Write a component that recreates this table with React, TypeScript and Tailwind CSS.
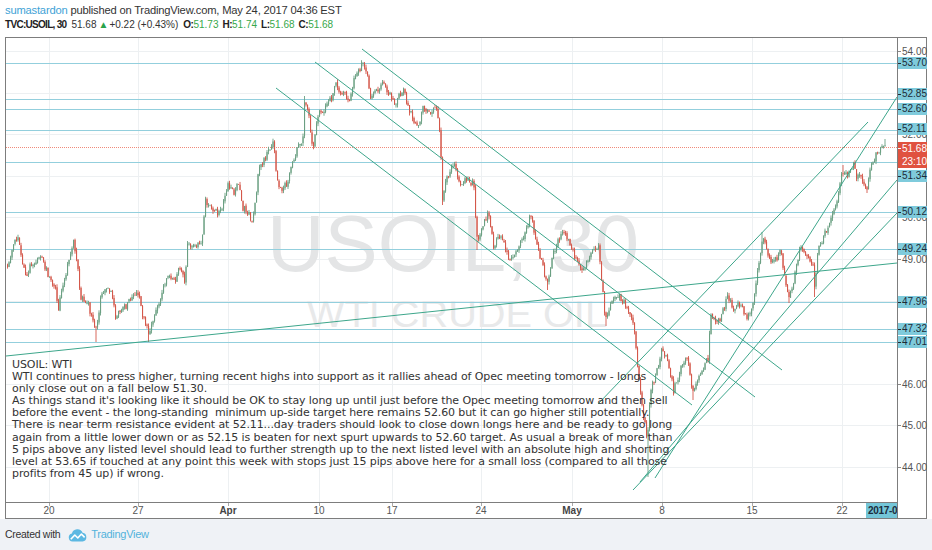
import React from 'react';

const SANS = '"Liberation Sans", Arial, sans-serif';

// y pixel for a price on the right scale
const Y = (p: number) => 51 + (54 - p) * 41.6;

// rough shape of the closes, in page pixels
const path: [number, number][] = [
  [7, 265], [12, 250], [17, 237], [22, 262], [25, 277], [32, 262], [40, 257], [48, 275], [55, 290], [58, 307],
  [63, 285], [68, 262], [73, 242], [77, 262], [80, 297], [88, 305], [95, 334], [100, 300], [107, 283], [111, 295],
  [115, 317], [125, 307], [137, 290], [142, 315], [148, 334], [155, 312], [167, 275], [175, 278], [180, 267],
  [184, 283], [187, 247], [195, 245], [200, 247], [203, 225], [205, 200], [212, 210], [220, 213], [224, 200],
  [227, 185], [233, 193], [238, 183], [242, 208], [247, 212], [252, 220], [255, 200], [258, 172], [265, 158],
  [273, 143], [277, 183], [282, 188], [287, 182], [292, 165], [297, 147], [302, 147], [304, 100], [308, 110],
  [312, 150], [318, 115], [324, 110], [330, 100], [335, 85], [340, 90], [343, 93], [348, 103], [355, 75],
  [363, 63], [367, 75], [370, 100], [376, 90], [383, 83], [390, 95], [395, 105], [402, 88], [408, 108],
  [417, 127], [423, 107], [430, 112], [437, 110], [440, 140], [442, 200], [445, 180], [453, 163], [460, 187],
  [465, 180], [473, 183], [477, 245], [482, 225], [488, 212], [493, 245], [500, 235], [510, 260], [518, 245],
  [525, 235], [530, 212], [535, 240], [542, 265], [547, 285], [552, 255], [558, 240], [563, 233], [570, 245],
  [577, 262], [583, 270], [590, 255], [598, 248], [605, 320], [612, 300], [617, 293], [625, 305], [633, 323],
  [637, 365], [643, 415], [647, 440], [650, 390], [655, 377], [662, 347], [667, 360], [673, 390], [680, 370],
  [687, 357], [692, 393], [700, 373], [708, 357], [710, 317], [720, 320], [727, 297], [733, 310], [740, 303],
  [747, 320], [753, 303], [757, 273], [762, 237], [767, 253], [772, 262], [777, 257], [780, 250], [783, 270],
  [788, 297], [793, 283], [800, 243], [807, 257], [813, 263], [814, 290], [818, 247], [823, 237], [830, 223],
  [837, 200], [842, 170], [846, 175], [850, 170], [853, 163], [856, 180], [860, 173], [864, 185], [867, 190],
  [870, 163], [877, 153], [883, 147], [885, 142],
];

const spikes: [number, number][] = [
  [95, 342], [148, 342], [304, 96], [442, 205], [477, 250], [547, 290], [605, 326], [648, 477], [692, 400],
  [757, 268], [762, 232], [788, 303], [814, 297], [842, 165], [867, 193], [885, 139],
];

function lerpPath(x: number) {
  for (let i = 1; i < path.length; i++) {
    if (x <= path[i][0]) {
      const [x0, y0] = path[i - 1];
      const [x1, y1] = path[i];
      const t = (x - x0) / (x1 - x0 || 1);
      return y0 + (y1 - y0) * t;
    }
  }
  return path[path.length - 1][1];
}

type Candle = { x: number; o: number; c: number; h: number; l: number };

function buildCandles(): Candle[] {
  let s = 98765;
  const rnd = () => {
    s = (s * 16807) % 2147483647;
    return s / 2147483647;
  };
  const out: Candle[] = [];
  let prev = lerpPath(7);
  for (let x = 7; x <= 885; x += 1.5) {
    const c = lerpPath(x) + (rnd() - 0.5) * 7;
    const o = prev + (rnd() - 0.5) * 1.5;
    const h = Math.min(o, c) - rnd() * 3;
    const l = Math.max(o, c) + rnd() * 3;
    out.push({ x, o, c, h, l });
    prev = c;
  }
  for (const [sx, sy] of spikes) {
    const k = out.reduce((best, cd, i) => (Math.abs(cd.x - sx) < Math.abs(out[best].x - sx) ? i : best), 0);
    if (sy > out[k].l) out[k].l = sy;
    if (sy < out[k].h) out[k].h = sy;
  }
  return out;
}

const candles = buildCandles();

const levels = [53.7, 52.85, 52.6, 52.11, 51.34, 50.12, 49.24, 47.96, 47.32, 47.01];

const trendLines: [number, number, number, number][] = [
  [362, 49, 782, 370],
  [315, 62, 755, 397],
  [276, 88, 692, 405],
  [6, 356, 897, 263],
  [598, 404, 868, 122],
  [633, 490, 897, 213],
  [640, 482, 897, 180],
  [655, 478, 897, 97],
];

const timeTicks: { x: number; label: string; bold?: boolean }[] = [
  { x: 49, label: '20' },
  { x: 138, label: '27' },
  { x: 228, label: 'Apr', bold: true },
  { x: 319, label: '10' },
  { x: 392, label: '17' },
  { x: 481, label: '24' },
  { x: 572, label: 'May', bold: true },
  { x: 662, label: '8' },
  { x: 752, label: '15' },
  { x: 842, label: '22' },
];

const plainPrices = [54, 53, 52, 51, 50, 49, 48, 47, 46, 45, 44];
// ones that sit fully behind a tag are not drawn as text
const hiddenPrices = [53, 51, 48, 47];

const priceTags: [string, number][] = [
  ['53.70', 63], ['52.85', 94], ['52.60', 109], ['52.11', 129], ['51.34', 176], ['50.12', 212],
  ['49.24', 249], ['47.96', 302], ['47.32', 329], ['47.01', 342],
];

const note = [
  'USOIL: WTI',
  'WTI continues to press higher, turning recent highs into support as it rallies ahead of Opec meeting tomorrow - longs',
  'only close out on a fall below 51.30.',
  "As things stand it's looking like it should be OK to stay long up until just before the Opec meeting tomorrow and then sell",
  'before the event - the long-standing  minimum up-side target here remains 52.60 but it can go higher still potentially.',
  'There is near term resistance evident at 52.11...day traders should look to close down longs here and be ready to go long',
  'again from a little lower down or as 52.15 is beaten for next spurt upwards to 52.60 target. As usual a break of more than',
  '5 pips above any listed level should lead to further strength up to the next listed level with an absolute high and shorting',
  'level at 53.65 if touched at any point this week with stops just 15 pips above here for a small loss (compared to all those',
  'profits from 45 up) if wrong.',
];

function PlotSvg() {
  return (
    <svg width={891} height={464} viewBox="6 38 891 464" className="block">
      {timeTicks.map((t) => (
        <line key={t.x} x1={t.x + 0.5} y1={38} x2={t.x + 0.5} y2={502} stroke="#edf0f2" />
      ))}
      {plainPrices.map((p) => (
        <line key={p} x1={6} y1={Math.round(Y(p)) + 0.5} x2={897} y2={Math.round(Y(p)) + 0.5} stroke="#edf0f2" />
      ))}
      <text x={267} y={271} fontFamily={SANS} fontSize={80} fill="#e4e5e6" textLength={372} lengthAdjust="spacingAndGlyphs">
        USOIL, 30
      </text>
      <text x={307} y={327} fontFamily={SANS} fontSize={36} fill="#e8e9ea" textLength={300} lengthAdjust="spacingAndGlyphs">
        WTI CRUDE OIL
      </text>
      {levels.map((p) => (
        <line key={p} x1={6} y1={Math.round(Y(p)) + 0.5} x2={897} y2={Math.round(Y(p)) + 0.5} stroke="#93cfdd" />
      ))}
      <line x1={6} y1={147.5} x2={897} y2={147.5} stroke="#f08a7a" strokeDasharray="1 1" />
      {candles.map((cd, i) => {
        const up = cd.c <= cd.o;
        const col = up ? '#6a9f82' : '#d4574a';
        const top = Math.min(cd.o, cd.c);
        const hgt = Math.max(Math.abs(cd.o - cd.c), 0.8);
        return (
          <g key={i}>
            <line x1={cd.x + 0.5} y1={cd.h} x2={cd.x + 0.5} y2={cd.l} stroke={col} strokeWidth={0.9} />
            <rect x={cd.x} y={top} width={1.1} height={hgt} fill={col} />
          </g>
        );
      })}
      {trendLines.map(([x1, y1, x2, y2], i) => (
        <line key={i} x1={x1} y1={y1} x2={x2} y2={y2} stroke="#3da68b" strokeWidth={1} />
      ))}
    </svg>
  );
}

function TradingViewLogo() {
  return (
    <svg width={19} height={14} viewBox="0 0 19 14">
      <path d="M4.5 13.5a4 4 0 0 1-0.6-7.9A5.6 5.6 0 0 1 14.6 4.8a4.4 4.4 0 0 1 0 8.7z" fill="#5cb8e2" />
      <path d="M2.8 11.2l4-4.2 3 3 3.6-4 3.2 3.4" fill="none" stroke="#ffffff" strokeWidth={1.6} strokeLinejoin="round" />
    </svg>
  );
}

export default function App() {
  return (
    <div className="w-[932px] h-[550px] bg-white flex flex-col overflow-hidden" style={{ fontFamily: SANS }}>
      <div className="h-[37px] pl-[5px] pt-[3px] text-[#333]">
        <div className="h-[14px] leading-[14px] whitespace-nowrap text-[11.2px] tracking-[-0.2px]">
          <span className="text-[#3ea2d6]">sumastardon</span> published on TradingView.com, May 24, 2017 04:36 EST
        </div>
        <div className="h-[16px] leading-[16px] whitespace-nowrap text-[10px]">
          <span className="font-bold text-[#222] tracking-[-0.7px]">TVC:USOIL, 30</span>
          <span className="ml-[5px]">51.68</span>
          <span className="ml-[2px] text-[#2aa34a]">▲</span>
          <span className="ml-[1px]">+0.22 (+0.43%)</span>
          <span className="ml-[5px] font-bold text-[#222] tracking-[-0.5px]">O:</span>
          <span className="text-[#37a84a]">51.73</span>
          <span className="ml-[4px] font-bold text-[#222] tracking-[-0.5px]">H:</span>
          <span className="text-[#37a84a]">51.74</span>
          <span className="ml-[4px] font-bold text-[#222] tracking-[-0.5px]">L:</span>
          <span className="text-[#37a84a]">51.68</span>
          <span className="ml-[4px] font-bold text-[#222] tracking-[-0.5px]">C:</span>
          <span className="text-[#37a84a]">51.68</span>
        </div>
      </div>

      <div className="ml-[5px] w-[922px] h-[482px] border border-[#7d7d7d] flex">
        <div className="w-[891px] flex flex-col">
          <div className="relative h-[464px] overflow-hidden">
            <PlotSvg />
            <div
              className="absolute left-[6px] top-[321px] text-[11px] leading-[12.1px] text-[#333] whitespace-pre tracking-[-0.1px]"
              style={{ fontFamily: '"DejaVu Sans", Verdana, sans-serif' }}
            >
              {note.map((line, i) => (
                <div key={i}>{line}</div>
              ))}
            </div>
          </div>
          <div className="relative h-[16px] border-t border-[#7d7d7d] text-[10px] text-[#555]">
            {timeTicks.map((t) => (
              <div key={t.x} className="absolute top-0" style={{ left: t.x - 6 }}>
                <div className="w-px h-[3px] bg-[#aaa]" />
                <div className={`absolute top-[2px] -translate-x-1/2 leading-[12px] ${t.bold ? 'font-bold text-[#444]' : ''}`}>
                  {t.label}
                </div>
              </div>
            ))}
            <div className="absolute right-0 top-0 w-[31px] h-[15px] bg-[#74c6d8] text-[#1c2c3c] font-bold leading-[15px] pl-[2px] overflow-hidden whitespace-nowrap tracking-[-0.3px]">
              2017-0
            </div>
          </div>
        </div>

        <div className="relative flex-1 border-l border-[#7d7d7d] text-[10px]">
          {plainPrices.map((p) => (
            <div
              key={p}
              className="absolute left-0 flex items-center h-[13px] text-[#555]"
              style={{ top: Math.round(Y(p)) - 38 - 6 }}
            >
              <div className="w-[3px] h-px bg-[#888]" />
              {!hiddenPrices.includes(p) && <span className="ml-[1px] leading-[13px]">{p.toFixed(2)}</span>}
            </div>
          ))}
          {priceTags.map(([label, y]) => (
            <div
              key={label}
              className="absolute left-0 w-[29px] flex items-center h-[12px] bg-[#7fcbdc] text-[#1d2b38]"
              style={{ top: y - 38 - 6 }}
            >
              <div className="w-[3px] h-px bg-[#1d2b38]" />
              <span className="ml-[1px] leading-[12px]">{label}</span>
            </div>
          ))}
          <div className="absolute left-0 top-[104px] w-[29px] h-[26px] bg-[#e0523f] text-white leading-[13px]">
            <div className="flex items-center">
              <div className="w-[3px] h-px bg-white" />
              <span className="ml-[1px]">51.68</span>
            </div>
            <div className="pl-[4px]">23:10</div>
          </div>
        </div>
      </div>

      <div className="flex-1 bg-[#eff2f6] flex items-center pl-[5px] text-[#333]">
        <span className="text-[10.5px] tracking-[-0.3px]">Created with</span>
        <span className="ml-[8px] flex items-center">
          <TradingViewLogo />
        </span>
        <span className="ml-[4px] text-[#52b2dc] text-[11px] tracking-[-0.3px]">TradingView</span>
      </div>
    </div>
  );
}
